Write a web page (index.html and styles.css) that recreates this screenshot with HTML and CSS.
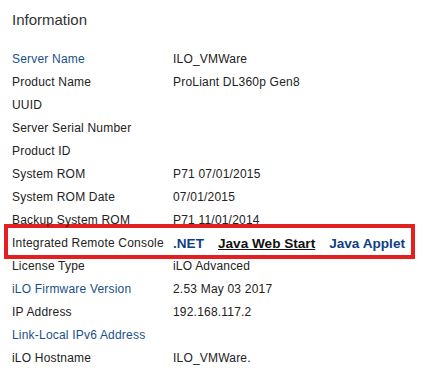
FILE: index.html
```html
<!DOCTYPE html>
<html lang="en">

<head>
  <meta charset="UTF-8">
  <meta name="viewport" content="width=device-width, initial-scale=1.0">
  <title>Information</title>
  <link rel="stylesheet" href="styles.css">
</head>

<body>
  <div class="panel">
    <h1>Information</h1>

    <div class="info-list">
      <div class="row"><span class="label link">Server Name</span><span class="value">ILO_VMWare</span></div>
      <div class="row"><span class="label">Product Name</span><span class="value">ProLiant DL360p Gen8</span></div>
      <div class="row"><span class="label">UUID</span><span class="value"></span></div>
      <div class="row"><span class="label">Server Serial Number</span><span class="value"></span></div>
      <div class="row"><span class="label">Product ID</span><span class="value"></span></div>
      <div class="row"><span class="label">System ROM</span><span class="value">P71 07/01/2015</span></div>
      <div class="row"><span class="label">System ROM Date</span><span class="value">07/01/2015</span></div>
      <div class="row"><span class="label">Backup System ROM</span><span class="value">P71 11/01/2014</span></div>
      <div class="row highlight">
        <span class="label">Integrated Remote Console</span>
        <span class="value console-links">
          <a href="#" class="console">.NET</a>
          <a href="#" class="console active">Java Web Start</a>
          <a href="#" class="console">Java Applet</a>
        </span>
      </div>
      <div class="row"><span class="label">License Type</span><span class="value">iLO Advanced</span></div>
      <div class="row"><span class="label link">iLO Firmware Version</span><span class="value">2.53 May 03 2017</span></div>
      <div class="row"><span class="label">IP Address</span><span class="value">192.168.117.2</span></div>
      <div class="row"><span class="label link">Link-Local IPv6 Address</span><span class="value"></span></div>
      <div class="row"><span class="label">iLO Hostname</span><span class="value">ILO_VMWare.</span></div>
    </div>
  </div>
</body>

</html>
```

FILE: styles.css
```css
body {
  margin: 0;
  background: #fff;
  font-family: "Liberation Sans", Arial, sans-serif;
  font-size: 12px;
  letter-spacing: 0.2px;
  color: #222;
}

.panel {
  padding: 10px 29px 0 12px;
}

h1 {
  margin: 0 0 18px;
  font-size: 15px;
  font-weight: normal;
  letter-spacing: 0;
  line-height: 20px;
  color: #333;
}

.row {
  display: flex;
  line-height: 23px;
  height: 23px;
  white-space: nowrap;
}

.label {
  width: 161px;
  flex: none;
}

.label.link {
  color: #1b4f8a;
}

.row.highlight {
  margin: -8px -4px -4px -8px;
  padding: 4px 0 0 4px;
  border: 4px solid #e1201f;
}

.console-links {
  display: flex;
  gap: 14px;
}

a.console {
  font-weight: bold;
  font-size: 13.6px;
  letter-spacing: 0;
  color: #0f3e86;
  text-decoration: none;
}

a.console.active {
  color: #111;
  text-decoration: underline;
}
```
